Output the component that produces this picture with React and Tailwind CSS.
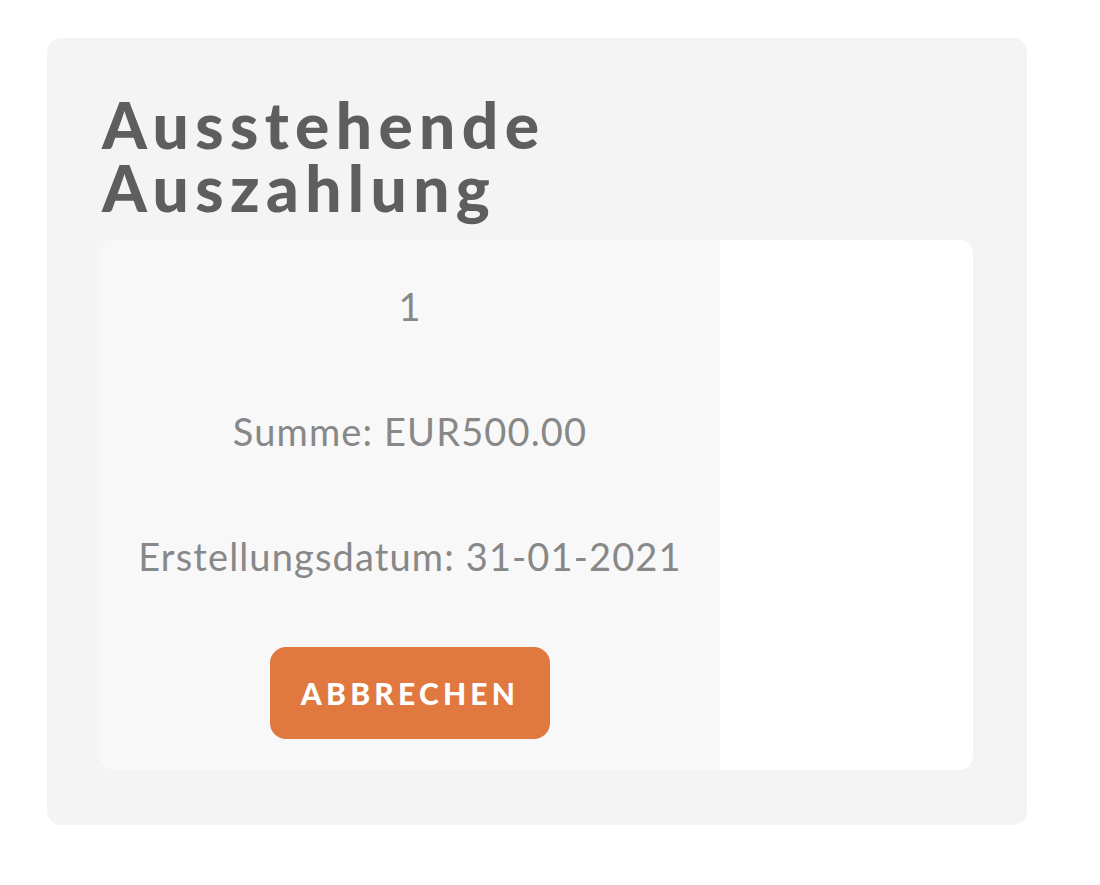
import React from 'react';

const payout = {
  id: 1,
  amount: 'EUR500.00',
  created: '31-01-2021',
};

const App = () => {
  return (
    <div className="min-h-screen bg-white pt-[38px] pl-[47px] font-['Lato',sans-serif]">
      {/* Card */}
      <div className="w-[980px] h-[787px] bg-[#f4f4f4] rounded-[14px] pt-[55px] px-[53px]">
        <h2 className="pl-[2px] text-[#5e5e5e] text-[64px] leading-[63px] font-black tracking-[0.1em] w-[540px]">
          Ausstehende Auszahlung
        </h2>

        {/* Payout list */}
        <div className="mt-[21px] w-[873px] h-[530px] bg-white rounded-[14px] flex overflow-hidden">
          <div className="w-[620px] bg-[#f8f8f8] flex flex-col items-center text-[#888888] text-[38px] tracking-[0.03em]">
            <div className="h-[66px] mt-[33px] flex items-center">{payout.id}</div>
            <div className="h-[66px] mt-[59px] flex items-center">Summe: {payout.amount}</div>
            <div className="h-[66px] mt-[59px] flex items-center">Erstellungsdatum: {payout.created}</div>
            <button className="mt-[58px] w-[280px] h-[92px] bg-[#e07840] rounded-[16px] text-white text-[30px] font-black tracking-[0.14em]">
              ABBRECHEN
            </button>
          </div>
        </div>
      </div>
    </div>
  );
};

export default App;
